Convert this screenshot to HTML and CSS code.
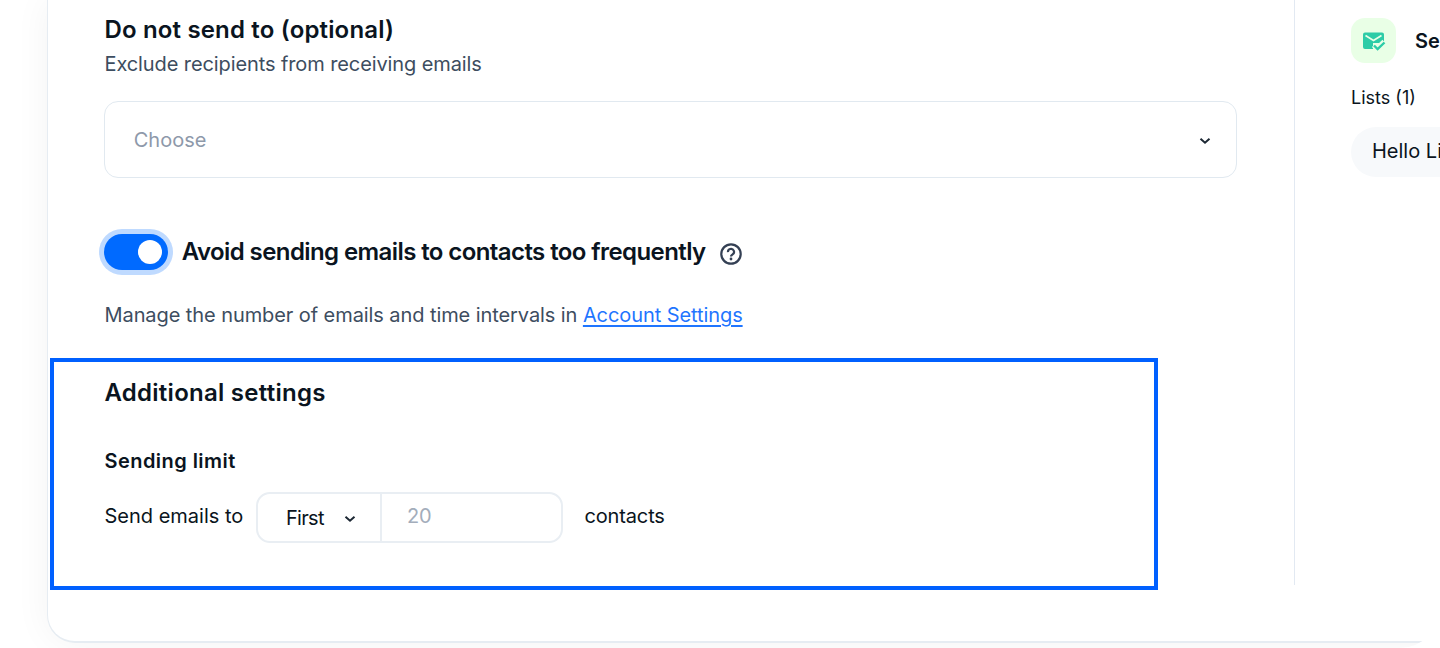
FILE: index.html
```html
<!DOCTYPE html>
<html lang="en">
<head>
  <meta charset="UTF-8" />
  <meta name="viewport" content="width=device-width, initial-scale=1.0"/>
  <title>Campaign recipients</title>
  <link rel="stylesheet" href="styles.css">
</head>
<body>
  <div class="page">
    <div class="card">
      <main class="form">
        <h2 class="title title-exclude">Do not send to (optional)</h2>
        <p class="hint">Exclude recipients from receiving emails</p>
        <div class="select">
          <span class="placeholder">Choose</span>
          <svg class="chevron" width="12" height="8" viewBox="0 0 12 8"><path d="M1.500 1.800l4.500 3.900 4.500-3.900"/></svg>
        </div>

        <div class="toggle-row">
          <div class="toggle"><span class="knob"></span></div>
          <h2 class="title title-toggle">Avoid sending emails to contacts too frequently</h2>
          <svg class="help" width="22" height="22" viewBox="0 0 22 22">
            <circle cx="11" cy="11" r="9.7"/>
            <path d="M8 9.200a3 3 0 1 1 4.600 2.200c-1.100.7-1.600 1.100-1.600 2.200"/>
            <circle class="dot" cx="11" cy="16" r="1.400"/>
          </svg>
        </div>
        <p class="manage">Manage the number of emails and time intervals in <a class="link" href="#">Account Settings</a></p>

        <h2 class="title title-additional">Additional settings</h2>
        <h3 class="subtitle">Sending limit</h3>
        <div class="limit-row">
          <span class="label">Send emails to</span>
          <div class="group">
            <div class="group-select">
              <span class="first">First</span>
              <svg class="chevron" width="12" height="8" viewBox="0 0 12 8"><path d="M1.500 1.800l4.500 3.900 4.500-3.900"/></svg>
            </div>
            <div class="group-input">20</div>
          </div>
          <span class="contacts">contacts</span>
        </div>
      </main>

      <aside class="summary">
        <div class="summary-head">
          <div class="summary-icon">
            <svg width="24" height="22" viewBox="0 0 24 22">
              <path class="mail" d="M3 2.500h17a2 2 0 0 1 2 2V13H11v6H3a2 2 0 0 1-2-2V4.500a2 2 0 0 1 2-2z"/>
              <path class="flap" d="M3.500 5.500l8 5 8-5"/>
              <path class="check-bg" d="M12 15l3.600 3.600 6.900-6.600"/>
              <path class="check" d="M12 15.500l3.600 3.600 6.900-6.600"/>
            </svg>
          </div>
          <span class="summary-title">Send to</span>
        </div>
        <p class="lists">Lists (1)</p>
        <div class="chip">Hello List</div>
      </aside>
    </div>
    <div class="highlight"></div>
  </div>
</body>
</html>
```
FILE: styles.css
```css
* {
  box-sizing: border-box;
}

body {
  margin: 0;
  background: #fff;
  font-family: Inter, "Liberation Sans", sans-serif;
  font-size: 20px;
  color: #0a1420;
}

h2, h3, p {
  margin: 0;
}

.page {
  position: relative;
  width: 1440px;
  height: 648px;
  overflow: hidden;
  border-bottom-right-radius: 40px;
}

.card {
  display: flex;
  align-items: flex-start;
  width: 1500px;
  height: 643px;
  margin-left: 47px;
  background: #fff;
  border: solid #e6ecf2;
  border-width: 0 0 2px 1px;
  border-bottom-left-radius: 28px;
  box-shadow: 0 0 36px rgba(0, 0, 0, 0.05);
}

.form {
  width: 1247px;
  height: 585px;
  padding: 14px 57px 0 56.5px;
  border-right: 1px solid #e2e9f2;
}

.title {
  font-size: 24px;
  line-height: 30px;
  font-weight: 600;
  white-space: nowrap;
}

.title-exclude {
  padding-top: 1px;
  letter-spacing: 0.16px;
}

.hint {
  margin-top: 6px;
  line-height: 26px;
  letter-spacing: -0.1px;
  color: #3d4d60;
}

.select {
  display: flex;
  align-items: center;
  justify-content: space-between;
  width: 1133px;
  height: 77px;
  margin: 24px 0 0 -0.75px;
  padding: 0 25px 0 29px;
  border: 1px solid #e1e9f0;
  border-radius: 14px;
}

.placeholder {
  color: #8e99aa;
}

.chevron {
  margin-top: 2px;
  fill: none;
  stroke: #1c2733;
  stroke-width: 2;
}

.toggle-row {
  display: flex;
  align-items: center;
  height: 36px;
  margin: 56px 0 0 -0.75px;
}

.toggle {
  display: flex;
  align-items: center;
  justify-content: flex-end;
  width: 64px;
  height: 36px;
  padding-right: 6px;
  border-radius: 18px;
  background: #006aff;
  box-shadow: 0 0 0 5px #bfdaff;
}

.knob {
  width: 24px;
  height: 24px;
  border-radius: 50%;
  background: #fff;
}

.title-toggle {
  margin-left: 14px;
  letter-spacing: -0.59px;
}

.help {
  margin: 3px 0 0 14px;
  fill: none;
  stroke: #344054;
  stroke-width: 2.2;
}

.help .dot {
  fill: #344054;
  stroke: none;
}

.manage {
  margin-top: 32px;
  line-height: 26px;
  letter-spacing: -0.08px;
  color: #3d4d60;
  white-space: nowrap;
}

.link {
  color: #1f75ff;
  text-underline-offset: 3px;
}

.title-additional {
  margin-top: 50px;
  letter-spacing: 0.26px;
}

.subtitle {
  margin-top: 40px;
  font-size: 20px;
  line-height: 26px;
  font-weight: 600;
  letter-spacing: 0.45px;
}

.limit-row {
  display: flex;
  align-items: center;
  height: 51px;
  margin-top: 18px;
}

.label {
  width: 151.5px;
  margin-top: -3px;
  white-space: nowrap;
}

.group {
  display: flex;
  width: 307px;
  height: 51px;
  border: 2px solid #e9eef3;
  border-radius: 14px;
}

.group-select {
  display: flex;
  align-items: center;
  justify-content: space-between;
  width: 124px;
  padding: 0 24px 0 28px;
  border-right: 2px solid #e9eef3;
}

.first {
  letter-spacing: -0.7px;
}

.group-input {
  padding-left: 25px;
  line-height: 45px;
  letter-spacing: -0.3px;
  color: #a3adbb;
}

.contacts {
  margin: -3px 0 0 21.5px;
  letter-spacing: -0.15px;
}

.summary {
  width: 252px;
  padding: 18px 0 0 56px;
}

.summary-head {
  display: flex;
  align-items: center;
  height: 45px;
}

.summary-icon {
  display: flex;
  align-items: center;
  justify-content: center;
  width: 45px;
  height: 45px;
  border-radius: 14px;
  background: #e9ffe6;
}

.mail {
  fill: #2dcca7;
}

.flap, .check, .check-bg {
  fill: none;
  stroke: #e9ffe6;
  stroke-width: 1.7;
}

.check-bg {
  stroke-width: 6;
}

.check {
  stroke: #2dcca7;
  stroke-width: 2.4;
}

.summary-title {
  margin-left: 19px;
  font-weight: 600;
  white-space: nowrap;
}

.lists {
  margin-top: 22px;
  font-size: 18px;
  line-height: 26px;
}

.chip {
  width: 160px;
  height: 50px;
  margin-top: 16px;
  padding-left: 21px;
  border-radius: 25px;
  background: #f7f9fb;
  line-height: 49px;
}

/* frame drawn over the additional settings */
.highlight {
  position: absolute;
  left: 50px;
  top: 358px;
  width: 1108px;
  height: 232px;
  border: 4px solid #0060ff;
}
```
